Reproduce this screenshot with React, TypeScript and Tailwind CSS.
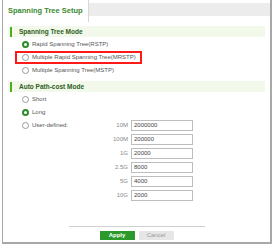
import React from 'react';

const font = { fontFamily: '"Liberation Sans", Arial, sans-serif' };

const Radio: React.FC<{ checked?: boolean; label: string }> = ({ checked, label }) => (
  <div className="flex items-center h-[13px] gap-[3px] whitespace-nowrap">
    {checked ? (
      <span className="w-[7px] h-[7px] rounded-full border-[2px] border-[#2f8a2a] bg-white" />
    ) : (
      <span className="w-[7px] h-[7px] rounded-full border border-[#9a9a9a] bg-white" />
    )}
    <span className="text-[6px] text-[#555]">{label}</span>
  </div>
);

const SectionHeader: React.FC<{ title: string }> = ({ title }) => (
  <div className="h-[11px] bg-[#f2f8ea] flex items-center">
    <span className="ml-[2px] w-[2px] h-[10px] bg-[#4caf20]" />
    <span className="ml-[7px] text-[6.5px] font-bold text-[#2c5e22]">{title}</span>
  </div>
);

const costs = [
  ['10M', '2000000'],
  ['100M', '200000'],
  ['1G', '20000'],
  ['2.5G', '8000'],
  ['5G', '4000'],
  ['10G', '2000'],
];

export default function App() {
  return (
    <div className="w-[273px] h-[246px] bg-white overflow-hidden" style={font}>
      <div className="ml-[2px] w-[270px] h-[244px] border-l border-b-2 border-r-[2px] border-[#a8a8a8] flex flex-col">
        <div className="flex h-[22px]">
          <div className="w-[86px] border-r border-[#d8d8d8] flex items-center pl-[5px]">
            <span className="text-[7.5px] font-semibold text-[#3b8a30]">Spanning Tree Setup</span>
          </div>
          <div className="flex-1 mt-[3px] h-[13px] bg-[#ececec]" />
        </div>
        <div className="px-[5px] pt-[4px] flex flex-col">
          <SectionHeader title="Spanning Tree Mode" />
          <div className="pl-[14px] pt-[1px] flex flex-col">
            <Radio checked label="Rapid Spanning Tree(RSTP)" />
            <div className="-ml-[7px] w-[127px] h-[13px] border-2 border-[#ff1a1a] pl-[5px] flex items-center">
              <Radio label="Multiple Rapid Spanning Tree(MRSTP)" />
            </div>
            <Radio label="Multiple Spanning Tree(MSTP)" />
          </div>
          <div className="mt-[4px]">
            <SectionHeader title="Auto Path-cost Mode" />
          </div>
          <div className="pl-[14px] pt-[1px] flex flex-col">
            <Radio label="Short" />
            <Radio checked label="Long" />
            <div className="flex">
              <div className="w-[83px] h-[13px] flex items-start">
                <Radio label="User-defined:" />
              </div>
              <div className="flex flex-col gap-[3px] pt-[1px]">
                {costs.map(([k, v]) => (
                  <div key={k} className="flex items-center h-[11px]">
                    <span className="w-[23px] text-right text-[6px] text-[#888]">{k}</span>
                    <div className="ml-[3px] w-[62px] h-[11px] border border-[#bdbdbd] flex items-center pl-[2px] text-[6px] text-[#444]">
                      {v}
                    </div>
                  </div>
                ))}
              </div>
            </div>
          </div>
        </div>
        <div className="mt-auto flex flex-col items-center pb-[2px]">
          <div className="w-[136px] border-t border-[#d0d0d0]" />
          <div className="flex gap-[4px] mt-[4px]">
            <div className="w-[35px] h-[9px] bg-[#2c9a2a] text-white text-[6px] font-bold flex items-center justify-center">
              Apply
            </div>
            <div className="w-[35px] h-[9px] bg-[#e6e6e6] text-[#999] text-[6px] flex items-center justify-center">
              Cancel
            </div>
          </div>
        </div>
      </div>
    </div>
  );
}
